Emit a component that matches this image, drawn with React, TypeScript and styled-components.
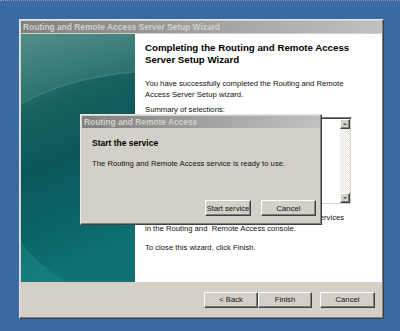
import * as React from "react"
import styled, { createGlobalStyle } from "styled-components"

const GlobalStyle = createGlobalStyle`
    html, body {
        margin: 0;
        padding: 0;
    }
    body {
        font-family: "Liberation Sans", Arial, sans-serif;
        background: #3a6aa3;
    }
`

const Screen = styled.div`
    width: 400px;
    height: 331px;
    box-sizing: border-box;
    padding: 18px 0 0 19px;
    background: #3a6aa3;
    border-top: 1px dotted #8e9cb0;
    overflow: hidden;
`

const Frame = styled.div<{ $w: number; $h: number }>`
    width: ${p => p.$w}px;
    height: ${p => p.$h}px;
    box-sizing: border-box;
    background: #d4d0c8;
    border: 1px solid;
    border-color: #e8e6e1 #404040 #404040 #e8e6e1;
    padding: 1px;
    box-shadow: inset -1px -1px #808080;
    display: flex;
    flex-direction: column;
`

const Window = styled(Frame)`
    position: relative;
`

const Dialog = styled(Frame)`
    position: absolute;
    left: 60px;
    top: 94px;
`

const TitleBar = styled.div`
    flex: none;
    height: 12px;
    line-height: 12px;
    padding-left: 2px;
    background: linear-gradient(90deg, #808080, #c0c0c0);
    color: #d4d0c8;
    font-weight: bold;
    font-size: 8.4px;
    white-space: nowrap;
    overflow: hidden;
`

const Body = styled.div`
    flex: none;
    display: flex;
    height: 248px;
    margin-top: 1px;
`

const Side = styled.div`
    width: 114px;
    flex: none;
    svg {
        display: block;
    }
`

const Content = styled.div`
    flex: 1;
    background: #ffffff;
    padding: 8px 30px 0 10px;
    color: #111;
`

const Heading = styled.h1`
    margin: 0;
    font-size: 9.7px;
    font-weight: bold;
    line-height: 12px;
    color: #000;
`

const Text = styled.p<{ $mt?: number }>`
    margin: ${p => p.$mt || 0}px 0 0;
    font-size: 7.7px;
    line-height: 11px;
    white-space: pre-wrap;
`

const ListBox = styled.div`
    margin-top: 2px;
    height: 88px;
    box-sizing: border-box;
    background: #fff;
    border: 1px solid;
    border-color: #808080 #fff #fff #808080;
    box-shadow: inset 1px 1px #404040, inset -1px -1px #d4d0c8;
    padding: 1px;
    display: flex;
    justify-content: flex-end;
`

const ScrollBar = styled.div`
    width: 10px;
    display: flex;
    flex-direction: column;
`

const ScrollButton = styled.div<{ $down?: boolean }>`
    height: 10px;
    box-sizing: border-box;
    background: #d4d0c8;
    border: 1px solid;
    border-color: #fff #404040 #404040 #fff;
    box-shadow: inset -1px -1px #808080;
    display: flex;
    align-items: center;
    justify-content: center;

    &::after {
        content: "";
        border-left: 2.5px solid transparent;
        border-right: 2.5px solid transparent;
        ${p => p.$down ? "border-top: 2px solid #555;" : "border-bottom: 2px solid #555;"}
    }
`

const ScrollTrack = styled.div`
    flex: 1;
    background: repeating-conic-gradient(#ffffff 0 25%, #e4e1db 0 50%) 0 0 / 2px 2px;
`

const Footer = styled.div`
    flex: 1;
    display: flex;
    align-items: center;
    justify-content: flex-end;
    padding-right: 7px;
`

const Button = styled.button<{ $w: number; $ml?: number }>`
    width: ${p => p.$w}px;
    height: 16px;
    margin-left: ${p => p.$ml || 0}px;
    padding: 0;
    box-sizing: border-box;
    background: #d4d0c8;
    border: 1px solid;
    border-color: #fff #404040 #404040 #fff;
    box-shadow: inset -1px -1px #808080;
    font-family: "Liberation Sans", Arial, sans-serif;
    font-size: 7.7px;
    color: #111;
`

const DialogBody = styled.div`
    flex: 1;
    display: flex;
    flex-direction: column;
    padding: 10px 0 7px 10px;
    color: #111;
`

const DialogHeading = styled.div`
    font-size: 8.5px;
    font-weight: bold;
    line-height: 11px;
    color: #000;
`

const DialogButtons = styled.div`
    margin-top: auto;
    display: flex;
    justify-content: flex-end;
    padding-right: 4px;
`

const SideArt = () => (
    <svg width="114" height="248" viewBox="0 0 114 248">
        <defs>
            <linearGradient id="teal" x1="0" y1="0" x2="0.2" y2="1">
                <stop offset="0" stopColor="#4a8682" />
                <stop offset="0.18" stopColor="#2d7471" />
                <stop offset="0.32" stopColor="#17625f" />
                <stop offset="0.55" stopColor="#0a5759" />
                <stop offset="0.8" stopColor="#0a6466" />
                <stop offset="1" stopColor="#0e7273" />
            </linearGradient>
            <linearGradient id="cap" x1="0" y1="0" x2="0" y2="1">
                <stop offset="0" stopColor="#5a938f" stopOpacity="0.5" />
                <stop offset="1" stopColor="#3f7f7b" stopOpacity="0.35" />
            </linearGradient>
        </defs>
        <rect width="114" height="248" fill="url(#teal)" />
        <path d="M0 70 Q45 44 114 38 L114 0 L0 0 Z" fill="url(#cap)" />
        <path d="M0 70 Q45 44 114 38" fill="none" stroke="#4e8d89" strokeOpacity="0.5" strokeWidth="1.5" />
        <path d="M0 208 Q18 232 46 248 L0 248 Z" fill="#1f8c8a" fillOpacity="0.45" />
    </svg>
)

export default function App() {
    return (
        <>
            <GlobalStyle />
            <Screen>
                <Window $w={365} $h={300}>
                    <TitleBar>Routing and Remote Access Server Setup Wizard</TitleBar>
                    <Body>
                        <Side>
                            <SideArt />
                        </Side>
                        <Content>
                            <Heading>Completing the Routing and Remote Access Server Setup Wizard</Heading>
                            <Text $mt={12}>You have successfully completed the Routing and Remote Access Server Setup wizard.</Text>
                            <Text $mt={4}>Summary of selections:</Text>
                            <ListBox>
                                <ScrollBar>
                                    <ScrollButton />
                                    <ScrollTrack />
                                    <ScrollButton $down />
                                </ScrollBar>
                            </ListBox>
                            <Text $mt={7}>
                                After you close this wizard, configure the selected services
                                <br />
                                {"in the Routing and  Remote Access console."}
                            </Text>
                            <Text $mt={8}>To close this wizard, click Finish.</Text>
                        </Content>
                    </Body>
                    <Footer>
                        <Button $w={54}>&lt; Back</Button>
                        <Button $w={54}>Finish</Button>
                        <Button $w={55} $ml={8}>Cancel</Button>
                    </Footer>
                    <Dialog $w={242} $h={111}>
                        <TitleBar>Routing and Remote Access</TitleBar>
                        <DialogBody>
                            <DialogHeading>Start the service</DialogHeading>
                            <Text $mt={9}>The Routing and Remote Access service is ready to use.</Text>
                            <DialogButtons>
                                <Button $w={46}>Start service</Button>
                                <Button $w={55} $ml={10}>Cancel</Button>
                            </DialogButtons>
                        </DialogBody>
                    </Dialog>
                </Window>
            </Screen>
        </>
    )
}
